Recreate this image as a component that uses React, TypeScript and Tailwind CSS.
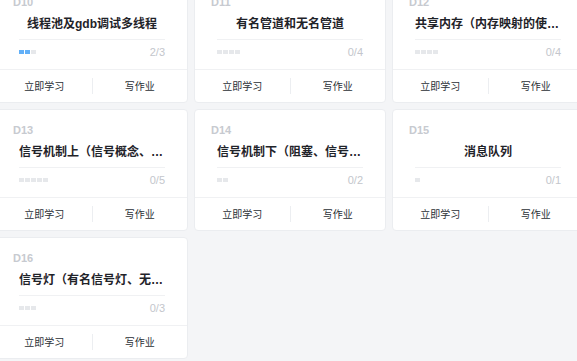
import React from 'react';

interface Lesson {
  day: string;
  title: string;
  done: number;
  total: number;
}

const LESSONS: Lesson[] = [
  { day: 'D10', title: '线程池及gdb调试多线程', done: 2, total: 3 },
  { day: 'D11', title: '有名管道和无名管道', done: 0, total: 4 },
  { day: 'D12', title: '共享内存（内存映射的使用、共享内存的使用）', done: 0, total: 4 },
  { day: 'D13', title: '信号机制上（信号概念、信号发送）', done: 0, total: 5 },
  { day: 'D14', title: '信号机制下（阻塞、信号集）', done: 0, total: 2 },
  { day: 'D15', title: '消息队列', done: 0, total: 1 },
  { day: 'D16', title: '信号灯（有名信号灯、无名信号灯）', done: 0, total: 3 },
];

function LessonCard({ lesson }: { lesson: Lesson }) {
  return (
    <div className="flex h-[122px] flex-col rounded-[4px] border border-[#ebedf0] bg-white">
      <div className="flex-1 px-4 pt-[13px]">
        <div className="text-[11px] font-bold leading-[14px] text-[#c7cad0]">{lesson.day}</div>
        <div className="mx-[6px]">
          <div className="mt-[6px] truncate text-center text-[12px] font-bold leading-[18px] text-[#1f2329]">
            {lesson.title}
          </div>
          <div className="mt-[6px] flex h-[24px] items-center justify-between border-t border-[#f0f1f3]">
            <div className="flex gap-[1px]">
              {Array.from({ length: lesson.total }).map((_, i) => (
                <span
                  key={i}
                  className={i < lesson.done ? 'h-[4px] w-[5px] bg-[#62b0f8]' : 'h-[4px] w-[5px] bg-[#e6e8eb]'}
                />
              ))}
            </div>
            <span className="text-[11px] leading-[14px] text-[#c3c6cc]">
              {lesson.done}/{lesson.total}
            </span>
          </div>
        </div>
      </div>
      {/* footer actions */}
      <div className="flex h-[33px] items-center border-t border-[#f0f1f3] text-[10px] text-[#2b2f36]">
        <button className="flex-1 text-center">立即学习</button>
        <span className="h-[16px] w-px bg-[#eceef1]" />
        <button className="flex-1 text-center">写作业</button>
      </div>
    </div>
  );
}

export default function App() {
  return (
    <div className="h-screen overflow-hidden bg-[#f4f5f7] font-['Liberation_Sans','Noto_Sans_CJK_SC',sans-serif]">
      <div className="-ml-1 -mt-[19px] grid w-[588px] grid-cols-[192px_192px_192px] gap-[6px]">
        {LESSONS.map(l => (
          <LessonCard key={l.day} lesson={l} />
        ))}
      </div>
    </div>
  );
}
